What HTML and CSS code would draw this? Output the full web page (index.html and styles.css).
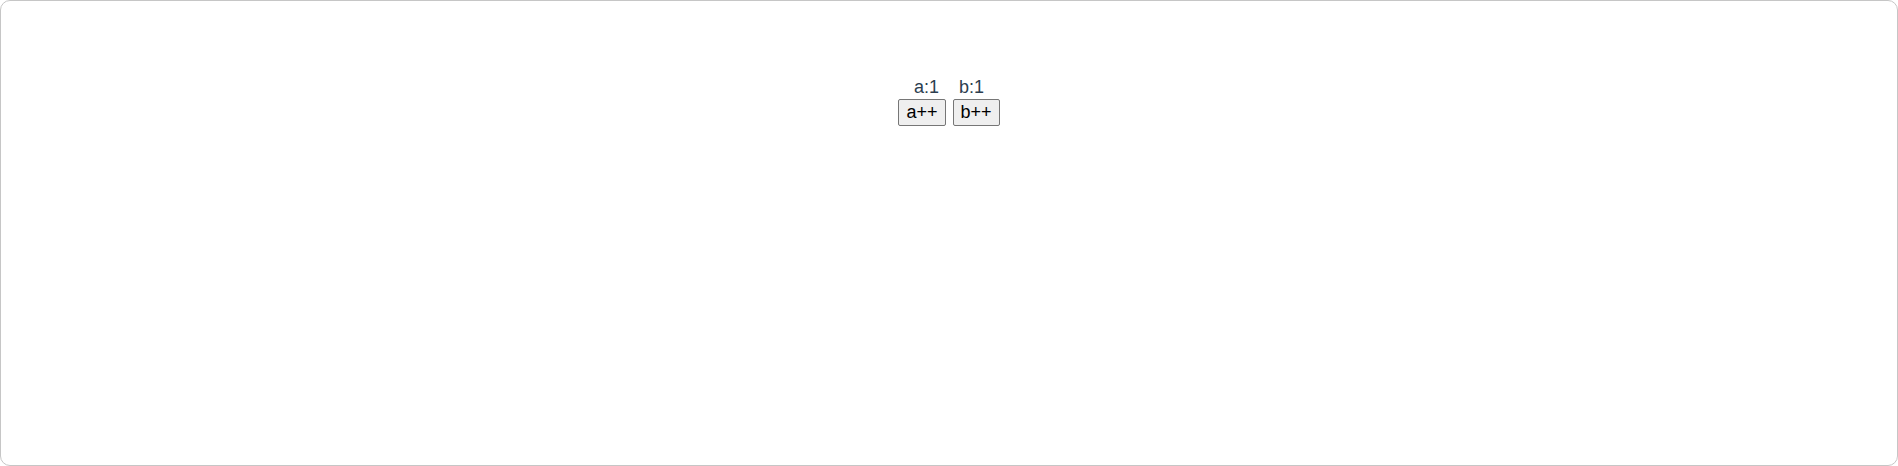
FILE: index.html
```html
<!DOCTYPE html>
<html>
<head>
<meta charset="utf-8">
<link rel="stylesheet" href="styles.css">
</head>
<body>
<div class="frame">
  <div class="app">
    <div class="values"><span class="val">a:1</span><span class="val">b:1</span></div>
    <div class="buttons"><button class="btn">a++</button><button class="btn">b++</button></div>
  </div>
</div>
</body>
</html>
```
FILE: styles.css
```css
html, body { margin: 0; padding: 0; background: #fff; }
.frame {
  box-sizing: border-box;
  width: 1898px;
  height: 466px;
  border: 1px solid #c6c6c6;
  border-radius: 10px;
  background: #fff;
}
.app {
  font-family: "Liberation Sans", Arial, sans-serif;
  color: #2c3e50;
  text-align: center;
  padding-top: 75px;
}
.values {
  font-size: 18px;
  display: flex;
  justify-content: center;
  gap: 20px;
  line-height: 23px;
}
.buttons {
  display: flex;
  justify-content: center;
  gap: 7px;
}
.btn {
  font-family: "Liberation Sans", Arial, sans-serif;
  font-size: 18px;
  color: #000;
  background: #efefef;
  border: 1px solid #767676;
  border-radius: 2px;
  padding: 2px 7px;
  line-height: 21px;
  height: 27px;
  box-sizing: border-box;
}
```
